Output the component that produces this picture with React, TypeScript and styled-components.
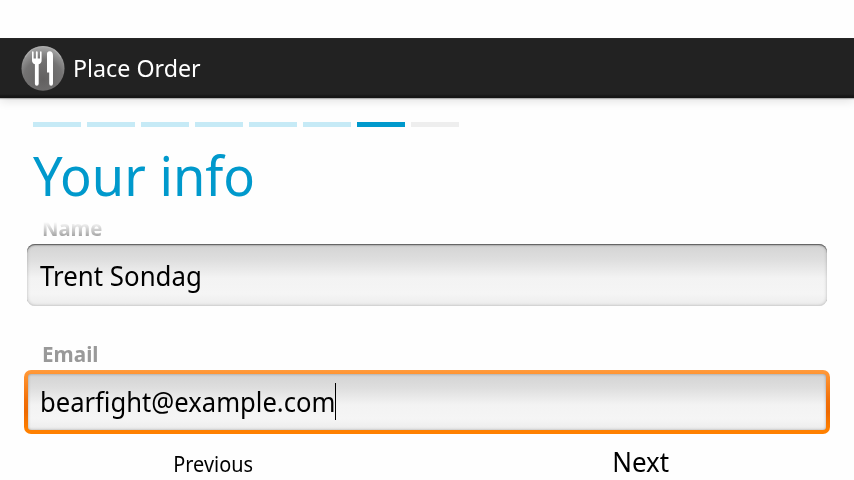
import React from "react";
import styled, { createGlobalStyle } from "styled-components";

const GlobalStyle = createGlobalStyle`
  * { box-sizing: border-box; }
  html, body { margin: 0; background: #fefefe; overflow: hidden; }
  body { font-family: "Noto Sans", "Open Sans", sans-serif; color: #000; }
`;

const Screen = styled.div`
  width: 854px;
  height: 480px;
  padding-top: 38px;
  display: flex;
  flex-direction: column;
  overflow: hidden;
  background: #fefefe;
`;

const ActionBar = styled.header`
  flex: none;
  height: 60px;
  display: flex;
  align-items: center;
  gap: 8px;
  padding-left: 21px;
  background: linear-gradient(#2a2a2a 0, #222 1px, #222 56px, #171717 58px, #151515 60px);
  box-shadow: 0 1px 1px rgba(0, 0, 0, 0.25), 0 2px 10px rgba(0, 0, 0, 0.14);
  clip-path: inset(0 0 -20px 0);
`;

const Label = styled.span<{ $size: number; $stretch?: number; $bold?: boolean; $center?: boolean }>`
  display: inline-block;
  white-space: pre;
  font-size: ${(p) => p.$size}px;
  font-weight: ${(p) => (p.$bold ? 700 : 400)};
  transform: scaleX(${(p) => p.$stretch ?? 1});
  transform-origin: ${(p) => (p.$center ? "center" : "left")};
`;

const BarTitle = styled(Label)`
  color: #fff;
  margin-bottom: 2px;
`;

const Steps = styled.div`
  flex: none;
  display: flex;
  gap: 6px;
  margin: 24px 0 0 33px;
`;

const Step = styled.div<{ $state: "done" | "current" | "todo" }>`
  width: 48px;
  height: 5px;
  background: ${(p) => ({ done: "#c6eaf6", current: "#0099cc", todo: "#eeeeee" })[p.$state]};
`;

const Heading = styled.h1`
  flex: none;
  margin: 18px 0 0 33px;
  height: 60px;
  line-height: 60px;
  font-weight: 400;
  color: #0099cc;
`;

const Form = styled.main`
  flex: none;
  height: 230px;
  margin-top: 17px;
  padding: 0 24px;
  overflow: hidden;
  mask-image: linear-gradient(transparent 0, #000 16px);
`;

const Field = styled.label`
  display: block;
  margin-bottom: 33px;
  &:first-child { margin-top: -9px; }
`;

const Caption = styled.div`
  height: 30px;
  line-height: 30px;
  padding-left: 18px;
  color: #999;
`;

const FocusRing = styled.div<{ $focused?: boolean }>`
  height: ${(p) => (p.$focused ? 64 : 63)}px;
  margin-top: ${(p) => (p.$focused ? 1 : 0)}px;
  padding: ${(p) => (p.$focused ? "4px" : "1px 3px 0")};
  border-radius: 7px;
  background: ${(p) => (p.$focused ? "linear-gradient(#ff9a3c 0, #ff9330 5px, #f27009 30px, #ee6a02 42px, #ff8000 60px)" : "none")};
`;

const Box = styled.div<{ $focused?: boolean }>`
  height: ${(p) => (p.$focused ? 56 : 62)}px;
  display: flex;
  align-items: center;
  padding-left: ${(p) => (p.$focused ? 12 : 13)}px;
  padding-bottom: ${(p) => (p.$focused ? 2 : 0)}px;
  border-radius: ${(p) => (p.$focused ? 3 : 8)}px;
  background: linear-gradient(#d3d3d3 0, #dedede 25%, #f3f3f3 55%, #f5f5f5 80%, #ececec 100%);
  box-shadow: ${(p) =>
    p.$focused
      ? "inset 0 0 3px rgba(0,0,0,.3)"
      : "inset 0 1px 0 #666, inset 0 2px 1px rgba(0,0,0,.12), inset 0 -1px 0 #d4d4d4, inset 0 0 3px 1px rgba(0,0,0,.13)"};
`;

const Caret = styled.span`
  width: 1px;
  height: 37px;
  margin-left: -17px;
  background: #000;
`;

const Footer = styled.footer`
  flex: none;
  display: grid;
  grid-template-columns: 1fr 1fr;
  margin-top: -10px;
  height: 38px;
`;

const NavButton = styled.button<{ $drop: number }>`
  border: 0;
  background: none;
  font: inherit;
  color: #000;
  height: 38px;
  line-height: 38px;
  padding: 0;
  margin-top: ${(p) => p.$drop}px;
`;

const Icon = styled.svg`
  display: block;
  flex: none;
`;

function FoodIcon() {
  return (
    <Icon width="44" height="46" viewBox="0 0 44 46">
      <defs>
        <radialGradient id="disc" cx="50%" cy="75%" r="70%">
          <stop offset="0" stopColor="#626060" />
          <stop offset=".65" stopColor="#747373" />
          <stop offset="1" stopColor="#a0a0a0" />
        </radialGradient>
      </defs>
      <ellipse cx="22" cy="23.4" rx="21.5" ry="22.3" fill="url(#disc)" />
      <path d="M4 12.4 Q10 1.6 22 1.6 Q34 1.6 40 12.4" fill="none" stroke="#b4b4b4" strokeOpacity=".65" strokeWidth="1.2" />
      <path
        d="M11 7.200 q0 -.9 .8 -.9 t.8 .9 V13.600 h2.300 V7.200 q0 -.9 .9 -.9 t.9 .9 V13.600 h2.300 V7.200 q0 -.9 .8 -.9 t.8 .9 V15.500 q0 2.800 -2.900 3.800 V38.700 q0 2 -1.900 2 t-1.900 -2 V19.300 q-2.900 -1 -2.900 -3.800 z"
        fill="#fff"
      />
      <path d="M26 9 q0 -2.700 2.600 -2.700 q3.400 0 3.400 4.500 V38.500 q0 2.200 -1.900 2.200 t-1.900 -2.200 V27.500 h-2.200 z" fill="#fff" />
    </Icon>
  );
}

const steps: ("done" | "current" | "todo")[] = [
  "done", "done", "done", "done", "done", "done", "current", "todo",
];

export default function App() {
  return (
    <Screen>
      <GlobalStyle />
      <ActionBar>
        <FoodIcon />
        <BarTitle $size={24} $stretch={0.968}>Place Order</BarTitle>
      </ActionBar>
      <Steps>
        {steps.map((state, i) => (
          <Step key={i} $state={state} />
        ))}
      </Steps>
      <Heading>
        <Label $size={55} $stretch={0.953}>Your info</Label>
      </Heading>
      <Form>
        <Field>
          <Caption><Label $size={21} $stretch={0.965} $bold>Name</Label></Caption>
          <FocusRing>
            <Box><Label $size={27} $stretch={0.957}>Trent Sondag</Label></Box>
          </FocusRing>
        </Field>
        <Field>
          <Caption><Label $size={21} $stretch={0.985} $bold>Email</Label></Caption>
          <FocusRing $focused>
            <Box $focused><Label $size={27} $stretch={0.948}>bearfight@example.com</Label><Caret /></Box>
          </FocusRing>
        </Field>
      </Form>
      <Footer>
        <NavButton $drop={3}><Label $size={21.5} $stretch={0.925} $center>Previous</Label></NavButton>
        <NavButton $drop={1}><Label $size={27} $stretch={0.96} $center>Next</Label></NavButton>
      </Footer>
    </Screen>
  );
}
